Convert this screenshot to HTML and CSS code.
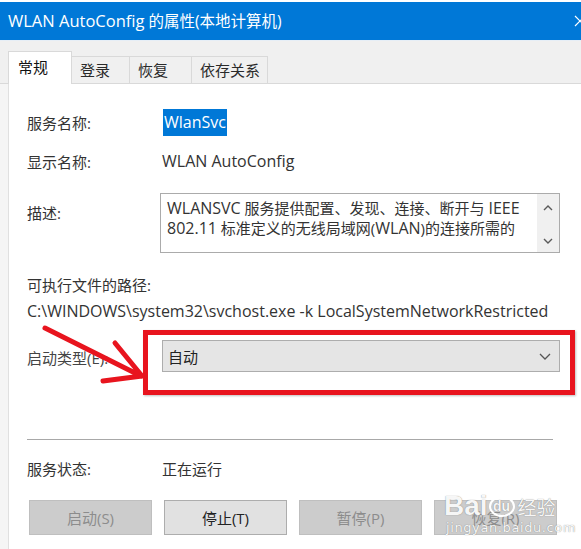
FILE: index.html
```html
<!DOCTYPE html>
<html lang="zh-CN">
<head>
<meta charset="utf-8">
<title>WLAN AutoConfig 的属性</title>
<link rel="stylesheet" href="styles.css">
</head>
<body>
<div class="window">
  <div class="titlebar">
    <span class="title"><span class="en-t">WLAN AutoConfig</span> 的属性(本地计算机)</span>
    <svg class="close" width="12" height="12" viewBox="0 0 12 12"><path d="M1 1 L11 11 M11 1 L1 11" stroke="#ffffff" stroke-width="1.2"/></svg>
  </div>
  <div class="tabs">
    <div class="tab active">常规</div>
    <div class="tab t2">登录</div>
    <div class="tab t3">恢复</div>
    <div class="tab t4">依存关系</div>
  </div>
  <div class="body">
    <div class="gutter"></div>
    <div class="panel">
      <div class="row r1"><span class="label">服务名称:</span><span class="value"><span class="sel en">WlanSvc</span></span></div>
      <div class="row r2"><span class="label">显示名称:</span><span class="value en">WLAN AutoConfig</span></div>
      <div class="row r3">
        <span class="label desc-label">描述:</span>
        <div class="descbox">
          <div class="desctext"><span class="en">WLANSVC</span> 服务提供配置、发现、连接、断开与 <span class="en">IEEE</span><br><span class="en">802.11</span> 标准定义的无线局域网(<span class="en">WLAN</span>)的连接所需的</div>
          <div class="scroll">
            <svg width="10" height="6" viewBox="0 0 10 6"><path d="M1 5 L5 1 L9 5" fill="none" stroke="#5a5a5a" stroke-width="1.4"/></svg>
            <svg width="10" height="6" viewBox="0 0 10 6"><path d="M1 1 L5 5 L9 1" fill="none" stroke="#5a5a5a" stroke-width="1.4"/></svg>
          </div>
        </div>
      </div>
      <div class="row r4"><span class="label">可执行文件的路径:</span></div>
      <div class="row r5"><span class="path en">C:\WINDOWS\system32\svchost.exe -k LocalSystemNetworkRestricted</span></div>
      <div class="row r6">
        <span class="label start-label">启动类型(E):</span>
        <div class="redbox">
          <div class="combo">
            <span>自动</span>
            <svg width="12" height="7" viewBox="0 0 12 7"><path d="M1 1 L6 6 L11 1" fill="none" stroke="#555" stroke-width="1.3"/></svg>
          </div>
        </div>
      </div>
      <div class="sep"></div>
      <div class="row r7"><span class="label">服务状态:</span><span class="value">正在运行</span></div>
      <div class="buttons">
        <div class="btn disabled">启动(S)</div>
        <div class="btn">停止(T)</div>
        <div class="btn disabled">暂停(P)</div>
        <div class="btn disabled">恢复(R)</div>
      </div>
    </div>
  </div>
  <svg class="arrow" width="581" height="549" viewBox="0 0 581 549">
    <path d="M45 328 L141 376 M115 343 L142 376 M103 381 L142 376" fill="none" stroke="#e8141e" stroke-width="5" stroke-linecap="round" stroke-linejoin="round"/>
  </svg>
  <div class="watermark">
    <div class="wm-top">
      <span class="wm-bai">Bai</span>
      <span class="wm-du">
        <svg class="paw" width="26" height="14" viewBox="0 0 26 14">
          <ellipse cx="5" cy="9" rx="3" ry="3.5" fill="none" stroke="#fff" stroke-width="1.5"/>
          <ellipse cx="10" cy="4" rx="3" ry="3.5" fill="none" stroke="#fff" stroke-width="1.5"/>
          <ellipse cx="16" cy="4" rx="3" ry="3.5" fill="none" stroke="#fff" stroke-width="1.5"/>
          <ellipse cx="21" cy="9" rx="3" ry="3.5" fill="none" stroke="#fff" stroke-width="1.5"/>
        </svg>
        <span class="du">du</span>
      </span>
      <span class="wm-jy">经验</span>
    </div>
    <div class="wm-url">jingyan.baidu.com</div>
  </div>
</div>
</body>
</html>
```

FILE: styles.css
```css
html, body {
  margin: 0;
  padding: 0;
  background: #ffffff;
}

body {
  width: 581px;
  height: 549px;
  overflow: hidden;
  font-family: "Open Sans", "Noto Sans CJK SC", sans-serif;
  color: #333333;
}

.window {
  position: relative;
  width: 581px;
  height: 549px;
  display: flex;
  flex-direction: column;
}

.titlebar {
  margin-top: 2px;
  height: 38px;
  background: #0078d7;
  color: #ffffff;
  display: flex;
  align-items: center;
  justify-content: space-between;
  padding-left: 8px;
  overflow: hidden;
}

.title {
  font-size: 15.5px;
  line-height: 38px;
  margin-top: -1px;
  white-space: nowrap;
}

.en-t {
  font-size: 16.5px;
}

.en {
  font-size: 16px;
}

.close {
  margin-right: -5px;
  margin-top: -1px;
  flex: none;
}

.tabs {
  background: #f0f0f0;
  border-bottom: 1px solid #d9d9d9;
  border-top: 1px solid #e6eef6;
  box-sizing: border-box;
  height: 44px;
  display: flex;
  align-items: flex-end;
  padding-left: 8px;
}

.tab {
  height: 27px;
  box-sizing: border-box;
  border: 1px solid #d9d9d9;
  border-bottom: none;
  border-left: none;
  background: #f0f0f0;
  font-size: 15px;
  line-height: 26px;
  padding-left: 8px;
  color: #2a2a2a;
  white-space: nowrap;
}

.tab.active {
  height: 33px;
  width: 64px;
  margin-bottom: -1px;
  background: #ffffff;
  border-left: 1px solid #d9d9d9;
  line-height: 30px;
  padding-left: 9px;
  color: #111;
}

.t2 { width: 58px; }
.t3 { width: 62px; }
.t4 { width: 76px; }

.body {
  flex: 1;
  display: flex;
}

.gutter {
  width: 8px;
  background: #f5f5f5;
  border-right: 1px solid #e0e0e0;
}

.panel {
  flex: 1;
  display: flex;
  flex-direction: column;
  padding-left: 18px;
  background: #ffffff;
}

.row {
  display: flex;
  align-items: center;
  font-size: 15px;
  height: 24px;
  white-space: nowrap;
}

.label {
  width: 135px;
  flex: none;
  color: #333;
}

.value {
  color: #333;
}

.sel {
  background: #0078d7;
  color: #ffffff;
  padding: 2px 1px 3px;
  margin-left: 1px;
}

.r1 { margin-top: 26px; }
.r2 { margin-top: 15px; }

.r3 {
  margin-top: 20px;
  height: 60px;
  align-items: flex-start;
}

.desc-label {
  margin-top: 8px;
  line-height: 24px;
}

.descbox {
  width: 400px;
  height: 60px;
  margin-left: -2px;
  box-sizing: border-box;
  border: 1px solid #ababab;
  display: flex;
}

.desctext {
  flex: 1;
  padding: 4px 0 0 6px;
  font-size: 15px;
  line-height: 20px;
  color: #333;
  overflow: hidden;
}

.scroll {
  width: 22px;
  flex: none;
  background: #f0f0f0;
  display: flex;
  flex-direction: column;
  align-items: center;
  justify-content: space-between;
  padding: 11px 0 8px;
  box-sizing: border-box;
}

.r4 { margin-top: 19px; }
.r5 { margin-top: 3px; }

.path {
  color: #333;
}

.r6 {
  margin-top: 7px;
  height: 65px;
  align-items: flex-start;
}

.start-label {
  margin-top: 16px;
  line-height: 24px;
  color: #444;
}

.redbox {
  margin-left: -19px;
  width: 432px;
  height: 65px;
  box-sizing: border-box;
  border: 5px solid #e8141e;
  box-shadow: 1px 1px 2px rgba(0,0,0,0.25);
}

.combo {
  margin-top: 5px;
  margin-left: 14px;
  width: 398px;
  height: 32px;
  box-sizing: border-box;
  border: 1px solid #adadad;
  background: #e5e5e5;
  display: flex;
  align-items: center;
  justify-content: space-between;
  padding: 0 8px 0 5px;
  font-size: 15px;
  color: #222;
}

.sep {
  margin-top: 44px;
  width: 526px;
  height: 1px;
  background: #a8a8a8;
}

.r7 { margin-top: 16px; }

.buttons {
  margin-top: 20px;
  margin-left: 2px;
  display: flex;
  gap: 12px;
}

.btn {
  width: 123px;
  height: 35px;
  box-sizing: border-box;
  border: 1px solid #adadad;
  background: #e1e1e1;
  display: flex;
  align-items: center;
  justify-content: center;
  font-size: 15px;
  color: #222;
}

.btn.disabled {
  background: #cccccc;
  border-color: #bfbfbf;
  color: #8c8c8c;
}

.arrow {
  position: absolute;
  left: 0;
  top: 0;
  pointer-events: none;
}

.watermark {
  position: absolute;
  left: 444px;
  top: 484px;
  width: 124px;
  color: rgba(255,255,255,0.95);
  text-shadow: 0 0 1px rgba(90,90,90,0.8);
  pointer-events: none;
  white-space: nowrap;
}

.wm-top {
  display: flex;
  align-items: flex-end;
  height: 36px;
}

.wm-bai {
  font-family: "Liberation Sans", sans-serif;
  font-size: 28px;
  font-weight: bold;
  line-height: 28px;
}

.wm-du {
  position: relative;
  width: 28px;
  height: 34px;
  flex: none;
  display: flex;
  align-items: flex-end;
  justify-content: center;
}

.paw {
  position: absolute;
  top: 0;
  left: 1px;
}

.du {
  font-family: "Liberation Sans", sans-serif;
  font-size: 14px;
  font-weight: bold;
  border: 2px solid #fff;
  border-radius: 50%;
  width: 22px;
  height: 17px;
  line-height: 16px;
  text-align: center;
  margin-bottom: 3px;
}

.wm-jy {
  font-family: "Noto Sans CJK SC", sans-serif;
  font-size: 19px;
  line-height: 26px;
  margin-left: 2px;
}

.wm-url {
  font-family: "DejaVu Sans", sans-serif;
  font-size: 13px;
  letter-spacing: 0.6px;
  line-height: 15px;
  margin-top: 0;
  margin-left: 2px;
}
```
